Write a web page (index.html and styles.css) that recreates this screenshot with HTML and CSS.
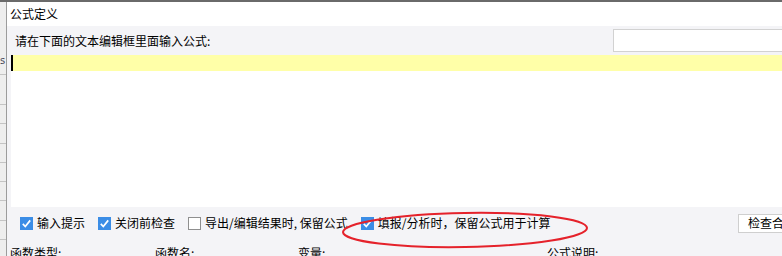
FILE: index.html
```html
<!DOCTYPE html>
<html>

<head>
  <meta charset="utf-8">
  <title>公式定义</title>
  <link rel="stylesheet" href="styles.css">
</head>

<body>
  <div class="screen">
    <div class="topline"></div>
    <div class="main">
      <!-- sheet behind the dialog -->
      <div class="side">
        <div class="side-head"><span class="side-s">s</span></div>
        <div class="side-cell"></div>
        <div class="side-cell"></div>
        <div class="side-cell"></div>
        <div class="side-cell"></div>
        <div class="side-cell"></div>
        <div class="side-cell"></div>
        <div class="side-cell"></div>
        <div class="side-cell"></div>
        <div class="side-cell"></div>
      </div>
      <div class="dialog">
        <div class="titlebar">公式定义</div>
        <div class="content">
          <div class="prompt-row">
            <span class="prompt">请在下面的文本编辑框里面输入公式:</span>
            <input type="text" class="search">
          </div>
          <div class="editor">
            <div class="line-current"><span class="caret"></span></div>
          </div>
          <div class="options">
            <label class="opt"><span class="box checked"><svg viewBox="0 0 13 13" width="13" height="13"><polyline points="2.8,6.8 5.3,9.5 10.2,3.4" /></svg></span>输入提示</label>
            <label class="opt"><span class="box checked"><svg viewBox="0 0 13 13" width="13" height="13"><polyline points="2.8,6.8 5.3,9.5 10.2,3.4" /></svg></span>关闭前检查</label>
            <label class="opt"><span class="box"></span>导出/编辑结果时, 保留公式</label>
            <label class="opt"><span class="box checked"><svg viewBox="0 0 13 13" width="13" height="13"><polyline points="2.8,6.8 5.3,9.5 10.2,3.4" /></svg></span>填报/分析时，保留公式用于计算</label>
            <button type="button" class="check-btn">检查合法性</button>
          </div>
          <div class="func-head">
            <span class="col-type">函数类型:</span>
            <span class="col-name">函数名:</span>
            <span class="col-var">变量:</span>
            <span class="col-desc">公式说明:</span>
          </div>
        </div>
      </div>
    </div>
    <!-- red annotation ring drawn over the options -->
    <svg class="annotation" width="782" height="256" viewBox="0 0 782 256">
      <ellipse cx="465" cy="230" rx="122" ry="17" transform="rotate(-1 465 230)" />
    </svg>
  </div>
</body>

</html>
```

FILE: styles.css
```css
body {
  margin: 0;
  padding: 0;
  font-family: "Noto Sans CJK SC", "Liberation Sans", sans-serif;
  font-size: 12px;
  color: #000;
}

.screen {
  position: relative;
  width: 782px;
  height: 256px;
  overflow: hidden;
  background-color: #f4f4f7;
}

.topline {
  height: 2px;
  background-color: #6a6a6a;
}

.main {
  display: flex;
  height: 254px;
}

.side {
  width: 6px;
  background-color: #eeeeee;
  border-right: 1px solid #9c9c9c;
  flex-shrink: 0;
}

.side-head {
  height: 72px;
  border-bottom: 1px solid #c4c4c4;
  position: relative;
}

.side-s {
  position: absolute;
  left: 0;
  top: 52px;
  font-family: "DejaVu Sans", sans-serif;
  font-size: 10px;
  line-height: 14px;
  color: #4a4a5a;
}

.side-head + .side-cell {
  height: 29px;
}

.side-cell {
  height: 18.3px;
  border-bottom: 1px solid #c4c4c4;
}

.dialog {
  flex: 1;
  display: flex;
  flex-direction: column;
  min-width: 0;
}

.titlebar {
  height: 25px;
  line-height: 24px;
  padding-left: 3px;
  background-color: #fff;
}

.content {
  flex: 1;
  padding-left: 4px;
  background-color: #f4f4f7;
}

.prompt-row {
  display: flex;
  align-items: center;
  height: 29px;
}

.prompt {
  flex: 1;
  padding-left: 4px;
  line-height: 16px;
}

.search {
  width: 175px;
  height: 23px;
  margin-right: -6px;
  box-sizing: border-box;
  border: 1px solid #d2d2d2;
  background-color: #fff;
  padding: 0;
}

.editor {
  height: 152px;
  background-color: #fff;
}

.line-current {
  height: 16px;
  background-color: #ffffa8;
}

.caret {
  display: block;
  width: 2px;
  height: 16px;
  background-color: #000;
}

.options {
  display: flex;
  align-items: center;
  height: 32px;
  padding-left: 9px;
}

.opt {
  display: flex;
  align-items: center;
  margin-right: 13px;
  line-height: 16px;
  white-space: nowrap;
}

.box {
  width: 13px;
  height: 13px;
  margin-right: 4px;
  box-sizing: border-box;
  border: 1px solid #8f8f8f;
  background-color: #fff;
  display: block;
}

.box.checked {
  border: none;
  background-color: #3b8de6;
}

.box svg {
  display: block;
}

.box polyline {
  fill: none;
  stroke: #fff;
  stroke-width: 1.7;
}

.check-btn {
  margin-left: auto;
  margin-right: -26px;
  width: 70px;
  height: 19px;
  padding: 0 0 0 9px;
  text-align: left;
  font-family: inherit;
  font-size: 12px;
  line-height: 16px;
  border: 1px solid #cfcfcf;
  background-color: #fff;
  white-space: nowrap;
  overflow: hidden;
}

.func-head {
  display: flex;
  margin-left: -1px;
  padding-top: 6px;
  line-height: 16px;
}

.col-type {
  width: 145px;
}

.col-name {
  width: 143px;
}

.col-var {
  width: 249px;
}

.annotation {
  position: absolute;
  left: 0;
  top: 0;
  pointer-events: none;
}

.annotation ellipse {
  fill: none;
  stroke: #e5222b;
  stroke-width: 2;
}
```
